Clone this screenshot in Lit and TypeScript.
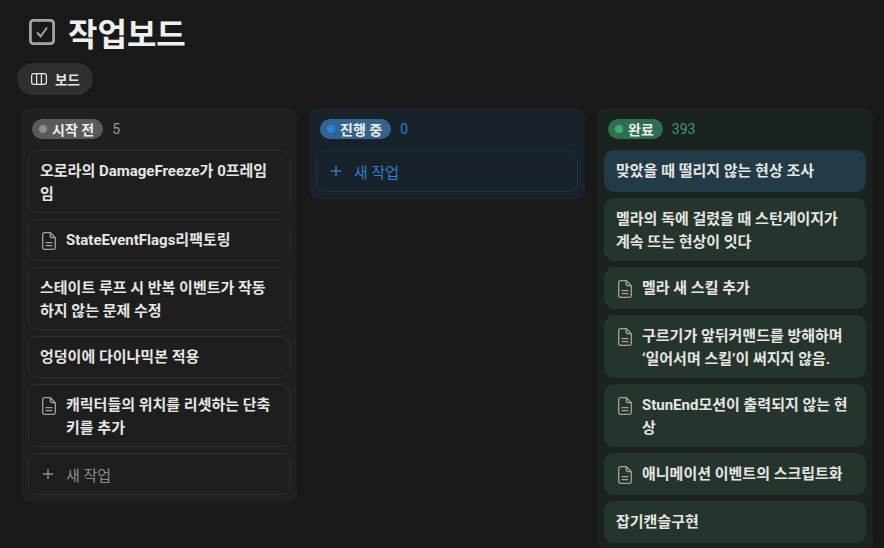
import { LitElement, html, css, nothing } from 'lit';
import { customElement } from 'lit/decorators.js';

interface Task {
  title: string;
  doc?: boolean;
  active?: boolean;
}

interface Column {
  kind: string;
  label: string;
  tasks: Task[];
  count: number;
  add: boolean;
}

const COLUMNS: Column[] = [
  {
    kind: 'todo',
    label: '시작 전',
    count: 5,
    add: true,
    tasks: [
      { title: '오로라의 DamageFreeze가 0프레임임' },
      { title: 'StateEventFlags리팩토링', doc: true },
      { title: '스테이트 루프 시 반복 이벤트가 작동하지 않는 문제 수정' },
      { title: '엉덩이에 다이나믹본 적용' },
      { title: '캐릭터들의 위치를 리셋하는 단축키를 추가', doc: true },
    ],
  },
  { kind: 'doing', label: '진행 중', count: 0, add: true, tasks: [] },
  {
    kind: 'done',
    label: '완료',
    count: 393,
    add: false,
    tasks: [
      { title: '맞았을 때 떨리지 않는 현상 조사', active: true },
      { title: '멜라의 독에 걸렸을 때 스턴게이지가 계속 뜨는 현상이 잇다' },
      { title: '멜라 새 스킬 추가', doc: true },
      { title: '구르기가 앞뒤커맨드를 방해하며 ‘일어서며 스킬’이 써지지 않음.', doc: true },
      { title: 'StunEnd모션이 출력되지 않는 현상', doc: true },
      { title: '애니메이션 이벤트의 스크립트화', doc: true },
      { title: '잡기캔슬구현' },
    ],
  },
];

const docIcon = html`<svg class="doc" viewBox="0 0 14 18" fill="none" stroke="currentColor" stroke-width="1.3">
  <path d="M2.4.7h5.9L13.3 5.7V15.6a1.7 1.7 0 0 1-1.7 1.7H2.4a1.7 1.7 0 0 1-1.7-1.7V2.4A1.7 1.7 0 0 1 2.4.7Z" />
  <path d="M8.3.7V4a1.7 1.7 0 0 0 1.7 1.7h3.3" />
  <path d="M3.6 10.6h6.8M3.6 13.6h6.8" />
</svg>`;

@customElement('app-root')
export class AppRoot extends LitElement {
  static styles = css`
    :host {
      display: block;
      height: 548px;
      overflow: hidden;
      background: #191919;
      font-family: Roboto, 'Noto Sans CJK KR', sans-serif;
      color: #e8e8e6;
    }

    .header {
      display: flex;
      align-items: center;
      gap: 13px;
      padding: 14px 0 0 29px;
      height: 35px;
    }

    .header svg {
      width: 26px;
      height: 26px;
      color: #a8a49c;
    }

    h1 {
      margin: 0;
      padding-top: 8px;
      font-size: 32px;
      line-height: 35px;
      font-weight: 700;
      color: #f0f0ee;
    }

    .tabs {
      padding: 14px 0 0 17px;
      height: 32px;
      display: flex;
    }

    .tab {
      display: flex;
      align-items: center;
      gap: 8px;
      height: 32px;
      padding: 0 13px 0 14px;
      border-radius: 16px;
      background: #2f2f2d;
      font-size: 13.5px;
      font-weight: 700;
      color: #e6e6e4;
    }

    .tab svg {
      width: 16px;
      height: 16px;
    }

    .board {
      display: flex;
      align-items: flex-start;
      gap: 12px;
      padding: 13px 0 0 21px;
    }

    .column {
      flex: none;
      width: 276px;
      box-sizing: border-box;
      padding: 0 7px 7px;
      border-radius: 10px;
    }

    .column.todo { background: #202020; }
    .column.doing { background: #18222b; }
    .column.done { background: #1a231e; }

    .column-head {
      display: flex;
      align-items: center;
      height: 42px;
      padding-left: 4px;
    }

    .pill {
      display: flex;
      align-items: center;
      gap: 5px;
      height: 20px;
      padding: 0 9px 0 7px;
      border-radius: 10px;
      font-size: 14px;
      font-weight: 700;
      color: #efefed;
    }

    .dot {
      width: 8px;
      height: 8px;
      border-radius: 50%;
    }

    .todo .pill { background: #5b5a55; }
    .todo .dot { background: #8f8d88; }
    .doing .pill { background: #35638f; }
    .doing .dot { background: #2383e2; }
    .done .pill { background: #2c7050; }
    .done .dot { background: #44a876; }

    .count {
      margin-left: 9px;
      font-size: 14px;
    }

    .todo .count { color: #9b9a96; }
    .doing .count { color: #2a7fd0; }
    .done .count { color: #3f9a6c; }

    .list {
      display: flex;
      flex-direction: column;
      gap: 6px;
    }

    .card {
      display: flex;
      gap: 8px;
      box-sizing: border-box;
      min-height: 42px;
      padding: 10px 16px 7px 12px;
      border-radius: 10px;
      font-size: 15px;
      line-height: 23px;
      font-weight: 700;
      color: #e6e6e4;
    }

    .todo .card {
      background: #1e1e1e;
      border: 1px solid #30302f;
      padding: 9px 15px 6px 11px;
    }

    .done .card { background: #26352c; }
    .done .card.active { background: #233b46; }

    .doc {
      flex: none;
      width: 14px;
      height: 18px;
      margin: 3px 2px 0;
      color: #a5a29b;
    }

    .add {
      display: flex;
      align-items: center;
      gap: 11px;
      box-sizing: border-box;
      height: 42px;
      padding: 0 12px;
      border-radius: 10px;
      font-size: 15px;
    }

    .add svg {
      width: 14px;
      height: 14px;
    }

    .todo .add {
      margin-top: 6px;
      border: 1px solid #30302f;
      background: #1e1e1e;
      color: #8e8d89;
    }

    .doing .add {
      border: 1px solid #1f3346;
      color: #2a7fd0;
    }
  `;

  renderCard(t: Task) {
    return html`<div class="card ${t.active ? 'active' : ''}">
      ${t.doc ? docIcon : nothing}
      <span>${t.title}</span>
    </div>`;
  }

  renderColumn(c: Column) {
    return html`<section class="column ${c.kind}">
      <div class="column-head">
        <span class="pill"><span class="dot"></span>${c.label}</span>
        <span class="count">${c.count}</span>
      </div>
      <div class="list">${c.tasks.map((t) => this.renderCard(t))}</div>
      ${c.add
        ? html`<div class="add">
            <svg viewBox="0 0 14 14" fill="none" stroke="currentColor" stroke-width="1.4"><path d="M7 2v10M2 7h10" /></svg>
            <span>새 작업</span>
          </div>`
        : nothing}
    </section>`;
  }

  render() {
    return html`
      <div class="header">
        <svg viewBox="0 0 26 26" fill="none" stroke="currentColor">
          <rect x="1.4" y="1.4" width="23.2" height="23.2" rx="3" stroke-width="2.8" />
          <path d="M8 13.5l3.6 4L18 8.5" stroke-width="2" />
        </svg>
        <h1>작업보드</h1>
      </div>
      <div class="tabs">
        <div class="tab">
          <svg viewBox="0 0 16 16" fill="none" stroke="currentColor" stroke-width="1.2">
            <rect x="0.6" y="2.6" width="14.8" height="10.8" rx="2.4" />
            <path d="M5.6 2.6v10.8M10.4 2.6v10.8" />
          </svg>
          보드
        </div>
      </div>
      <div class="board">${COLUMNS.map((c) => this.renderColumn(c))}</div>
    `;
  }
}
